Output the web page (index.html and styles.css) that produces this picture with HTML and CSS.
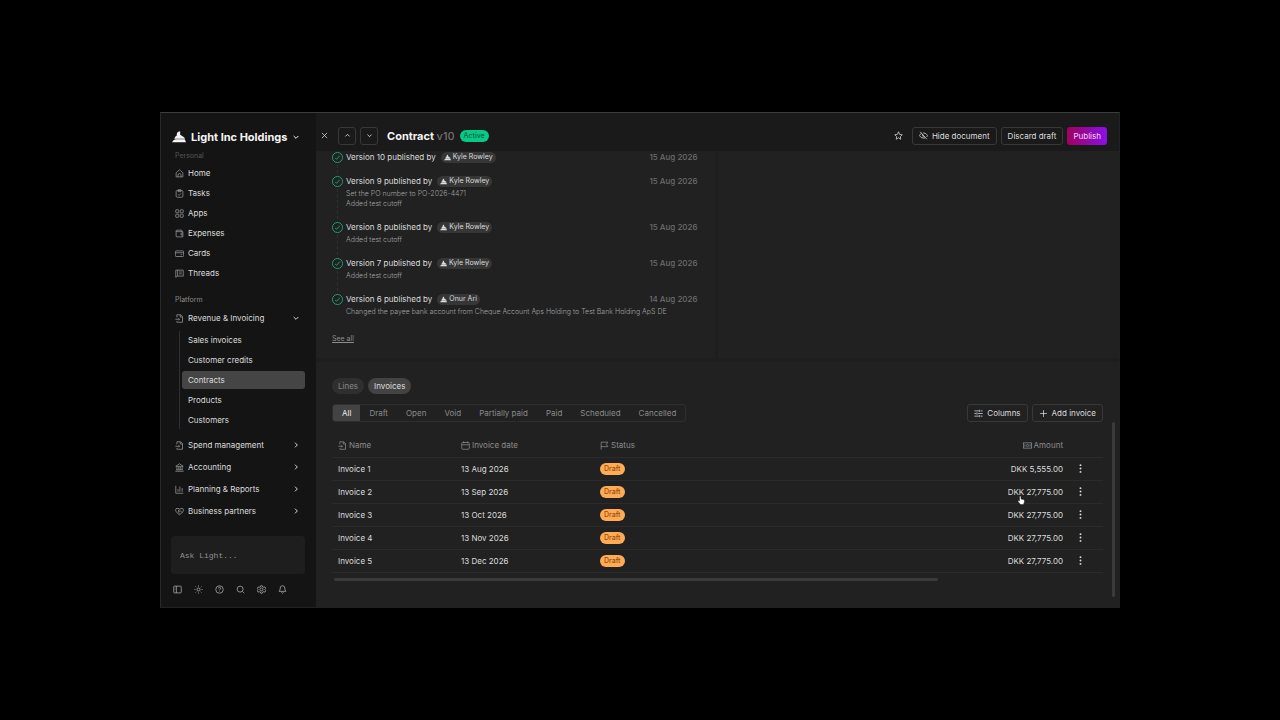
FILE: index.html
```
<!DOCTYPE html>
<html lang="en">
<head>
  <meta charset="UTF-8" />
  <title>Contract v10</title>
  <link rel="stylesheet" href="styles.css">
</head>
<body>

<!-- Icon set -->
<svg class="sprite" aria-hidden="true">
  <symbol id="logo" viewBox="0 0 24 24"><path d="M4 15 Q5 11 8 10 Q8 4 11 3 L14 2 V8 L20 12 Q22 13 22 15 Z M0 21 Q2 17 6 16 H22 L24 21 Z" fill="currentColor" stroke="none"/></symbol>
  <symbol id="down" viewBox="0 0 24 24"><path d="M5 9l7 7 7-7"/></symbol>
  <symbol id="up" viewBox="0 0 24 24"><path d="M5 15l7-7 7 7"/></symbol>
  <symbol id="right" viewBox="0 0 24 24"><path d="M9 5l7 7-7 7"/></symbol>
  <symbol id="close" viewBox="0 0 24 24"><path d="M5 5l14 14M19 5L5 19"/></symbol>
  <symbol id="home" viewBox="0 0 24 24"><path d="M3 10l9-8 9 8v11H3zM8 21v-5a4 4 0 0 1 8 0v5"/></symbol>
  <symbol id="tasks" viewBox="0 0 24 24"><rect x="3" y="4" width="18" height="18" rx="3"/><path d="M8 2h8v5H8zM8 14l3 3 5-5"/></symbol>
  <symbol id="apps" viewBox="0 0 24 24"><rect x="2" y="2" width="8" height="8" rx="1"/><rect x="14" y="2" width="8" height="8" rx="1"/><rect x="2" y="14" width="8" height="8" rx="1"/><rect x="14" y="14" width="8" height="8" rx="1"/></symbol>
  <symbol id="wallet" viewBox="0 0 24 24"><path d="M18 7V3H5a2 2 0 0 0 0 4h16v14H5a2 2 0 0 1-2-2V5M21 11h-5v5h5"/></symbol>
  <symbol id="card" viewBox="0 0 24 24"><rect x="1" y="5" width="22" height="15" rx="2"/><path d="M1 10h22M15 15h4"/></symbol>
  <symbol id="threads" viewBox="0 0 24 24"><path d="M2 3h20v16H7l-5 3zM7 3v16M11 8h7M11 13h7"/></symbol>
  <symbol id="file" viewBox="0 0 24 24"><path d="M5 9V2h10l5 5v15H5v-3M14 2v6h6M1 14h11M9 11l3 3-3 3"/></symbol>
  <symbol id="bank" viewBox="0 0 24 24"><path d="M2 9l10-7 10 7zM5 10v8M10 10v8M14 10v8M19 10v8M3 18h18M1 22h22"/></symbol>
  <symbol id="chart" viewBox="0 0 24 24"><path d="M2 2v20h20M8 11v7M13 4v14M19 8v10"/></symbol>
  <symbol id="partners" viewBox="0 0 24 24"><path d="M12 21L3 13Q0 9 3 4h8l2 2 3-2h5q3 5 0 9zM12 6l-4 5q3 3 6-1l5 5M9 14l4 4"/></symbol>
  <symbol id="sidebar" viewBox="0 0 24 24"><rect x="2" y="3" width="20" height="18" rx="2"/><path d="M9 3v18M5 8h1M5 12h1"/></symbol>
  <symbol id="sun" viewBox="0 0 24 24"><circle cx="12" cy="12" r="4"/><path d="M12 1v3M12 20v3M1 12h3M20 12h3M4 4l2 2M18 18l2 2M4 20l2-2M18 6l2-2"/></symbol>
  <symbol id="help" viewBox="0 0 24 24"><circle cx="12" cy="12" r="10"/><path d="M9 9a3 3 0 1 1 4 3q-1 0-1 2M12 17v1"/></symbol>
  <symbol id="search" viewBox="0 0 24 24"><circle cx="11" cy="11" r="8"/><path d="M17 17l5 5"/></symbol>
  <symbol id="gear" viewBox="0 0 24 24"><path d="M10 2h4l1 3 3 1 3-1 2 4-2 3 2 3-2 4-3-1-3 1-1 3h-4l-1-3-3-1-3 1-2-4 2-3-2-3 2-4 3 1 3-1z"/><circle cx="12" cy="12" r="4"/></symbol>
  <symbol id="bell" viewBox="0 0 24 24"><path d="M3 17q3-3 3-9a6 6 0 0 1 12 0q0 6 3 9zM9 20q3 4 6 0"/></symbol>
  <symbol id="star" viewBox="0 0 24 24"><path d="M12 2l3 7 7 1-5 5 1 7-6-4-6 4 1-7-5-5 7-1z"/></symbol>
  <symbol id="eye-off" viewBox="0 0 24 24"><path d="M3 2l18 20M7 6Q3 8 1 12q4 7 11 7 3 0 5-1M11 5q8 0 12 7-1 2-3 4M10 9a4 4 0 0 0 5 6"/></symbol>
  <symbol id="check" viewBox="0 0 24 24"><circle cx="12" cy="12" r="11"/><path d="M7 13l3 3 7-8"/></symbol>
  <symbol id="sliders" viewBox="0 0 24 24"><path d="M1 5h12M18 5h5M15 2v6M1 12h5M11 12h12M8 9v6M1 19h12M18 19h5M15 16v6"/></symbol>
  <symbol id="plus" viewBox="0 0 24 24"><path d="M12 3v18M3 12h18"/></symbol>
  <symbol id="calendar" viewBox="0 0 24 24"><rect x="2" y="4" width="20" height="18" rx="2"/><path d="M2 10h20M7 1v5M17 1v5"/></symbol>
  <symbol id="flag" viewBox="0 0 24 24"><path d="M3 23V3h18l-4 6 4 6H3"/></symbol>
  <symbol id="money" viewBox="0 0 24 24"><rect x="1" y="5" width="22" height="14"/><circle cx="12" cy="12" r="3"/><path d="M5 9v6M19 9v6"/></symbol>
  <symbol id="dots" viewBox="0 0 24 24"><g fill="currentColor" stroke="none"><circle cx="12" cy="3" r="2.5"/><circle cx="12" cy="12" r="2.5"/><circle cx="12" cy="21" r="2.5"/></g></symbol>
</svg>

<div class="app">

  <!-- Sidebar -->
  <aside class="sidebar">
    <button class="company"><svg class="logo"><use href="#logo"/></svg>Light Inc Holdings<svg class="icon"><use href="#down"/></svg></button>

    <nav class="nav">
      <div class="nav-label faded">Personal</div>
      <a href="#"><svg class="icon"><use href="#home"/></svg>Home</a>
      <a href="#"><svg class="icon"><use href="#tasks"/></svg>Tasks</a>
      <a href="#"><svg class="icon"><use href="#apps"/></svg>Apps</a>
      <a href="#"><svg class="icon"><use href="#wallet"/></svg>Expenses</a>
      <a href="#"><svg class="icon"><use href="#card"/></svg>Cards</a>
      <a href="#"><svg class="icon"><use href="#threads"/></svg>Threads</a>

      <div class="nav-label platform">Platform</div>
      <a href="#" class="group"><svg class="icon"><use href="#file"/></svg>Revenue &amp; Invoicing<svg class="icon caret"><use href="#down"/></svg></a>
      <div class="subnav">
        <a href="#">Sales invoices</a>
        <a href="#">Customer credits</a>
        <a href="#" class="current">Contracts</a>
        <a href="#">Products</a>
        <a href="#">Customers</a>
      </div>
      <a href="#" class="group"><svg class="icon"><use href="#file"/></svg>Spend management<svg class="icon caret"><use href="#right"/></svg></a>
      <a href="#" class="group"><svg class="icon"><use href="#bank"/></svg>Accounting<svg class="icon caret"><use href="#right"/></svg></a>
      <a href="#" class="group"><svg class="icon"><use href="#chart"/></svg>Planning &amp; Reports<svg class="icon caret"><use href="#right"/></svg></a>
      <a href="#" class="group"><svg class="icon"><use href="#partners"/></svg>Business partners<svg class="icon caret"><use href="#right"/></svg></a>
    </nav>

    <input class="ask" type="text" placeholder="Ask Light..." aria-label="Ask Light">

    <div class="tools">
      <button aria-label="Toggle sidebar"><svg class="icon"><use href="#sidebar"/></svg></button>
      <button aria-label="Theme"><svg class="icon"><use href="#sun"/></svg></button>
      <button aria-label="Help"><svg class="icon"><use href="#help"/></svg></button>
      <button aria-label="Search"><svg class="icon"><use href="#search"/></svg></button>
      <button aria-label="Settings"><svg class="icon"><use href="#gear"/></svg></button>
      <button aria-label="Notifications"><svg class="icon"><use href="#bell"/></svg></button>
    </div>
  </aside>

  <!-- Contract -->
  <main class="main">
    <header class="topbar">
      <button class="plain" aria-label="Close"><svg class="icon"><use href="#close"/></svg></button>
      <button class="btn square" aria-label="Previous"><svg class="icon small"><use href="#up"/></svg></button>
      <button class="btn square" aria-label="Next"><svg class="icon small"><use href="#down"/></svg></button>
      <h1>Contract <span>v10</span></h1>
      <span class="active">Active</span>
      <button class="plain star" aria-label="Favourite"><svg class="icon"><use href="#star"/></svg></button>
      <button class="btn"><svg class="icon"><use href="#eye-off"/></svg>Hide document</button>
      <button class="btn">Discard draft</button>
      <button class="btn publish">Publish</button>
    </header>

    <div class="panels">
      <section class="history">
        <ul>
          <li>
            <div class="entry"><svg class="icon check"><use href="#check"/></svg>Version 10 published by <span class="user"><svg class="icon"><use href="#logo"/></svg>Kyle Rowley</span><time>15 Aug 2026</time></div>
          </li>
          <li>
            <div class="entry"><svg class="icon check"><use href="#check"/></svg>Version 9 published by <span class="user"><svg class="icon"><use href="#logo"/></svg>Kyle Rowley</span><time>15 Aug 2026</time></div>
            <p>Set the PO number to PO-2026-4471<br>Added test cutoff</p>
          </li>
          <li>
            <div class="entry"><svg class="icon check"><use href="#check"/></svg>Version 8 published by <span class="user"><svg class="icon"><use href="#logo"/></svg>Kyle Rowley</span><time>15 Aug 2026</time></div>
            <p>Added test cutoff</p>
          </li>
          <li>
            <div class="entry"><svg class="icon check"><use href="#check"/></svg>Version 7 published by <span class="user"><svg class="icon"><use href="#logo"/></svg>Kyle Rowley</span><time>15 Aug 2026</time></div>
            <p>Added test cutoff</p>
          </li>
          <li>
            <div class="entry"><svg class="icon check"><use href="#check"/></svg>Version 6 published by <span class="user"><svg class="icon"><use href="#logo"/></svg>Onur Ari</span><time>14 Aug 2026</time></div>
            <p>Changed the payee bank account from Cheque Account Aps Holding to Test Bank Holding ApS DE</p>
          </li>
        </ul>
        <a href="#" class="see-all">See all</a>
      </section>
      <section class="document" aria-label="Document"></section>
    </div>

    <section class="invoices">
      <div class="pills">
        <button>Lines</button>
        <button class="on">Invoices</button>
      </div>

      <div class="toolbar">
        <div class="filters">
          <button class="on">All</button>
          <button>Draft</button>
          <button>Open</button>
          <button>Void</button>
          <button>Partially paid</button>
          <button>Paid</button>
          <button>Scheduled</button>
          <button>Cancelled</button>
        </div>
        <button class="btn"><svg class="icon"><use href="#sliders"/></svg>Columns</button>
        <button class="btn"><svg class="icon"><use href="#plus"/></svg>Add invoice</button>
      </div>

      <table>
        <thead>
          <tr>
            <th class="name"><svg class="icon"><use href="#file"/></svg>Name</th>
            <th class="date"><svg class="icon"><use href="#calendar"/></svg>Invoice date</th>
            <th><svg class="icon"><use href="#flag"/></svg>Status</th>
            <th class="amount"><svg class="icon"><use href="#money"/></svg>Amount</th>
            <th class="more"></th>
          </tr>
        </thead>
        <tbody>
          <tr>
            <td>Invoice 1</td><td>13 Aug 2026</td><td><span class="draft">Draft</span></td><td class="amount">DKK 5,555.00</td>
            <td class="more"><button class="plain" aria-label="More"><svg class="icon"><use href="#dots"/></svg></button></td>
          </tr>
          <tr>
            <td>Invoice 2</td><td>13 Sep 2026</td><td><span class="draft">Draft</span></td>
            <td class="amount">DKK 27,775.00<svg class="cursor" viewBox="0 0 16 20"><path d="M5 10V3q1-2 3 0v5l5 1q2 1 2 4l-2 6H7l-5-6q0-3 3-1z"/></svg></td>
            <td class="more"><button class="plain" aria-label="More"><svg class="icon"><use href="#dots"/></svg></button></td>
          </tr>
          <tr>
            <td>Invoice 3</td><td>13 Oct 2026</td><td><span class="draft">Draft</span></td><td class="amount">DKK 27,775.00</td>
            <td class="more"><button class="plain" aria-label="More"><svg class="icon"><use href="#dots"/></svg></button></td>
          </tr>
          <tr>
            <td>Invoice 4</td><td>13 Nov 2026</td><td><span class="draft">Draft</span></td><td class="amount">DKK 27,775.00</td>
            <td class="more"><button class="plain" aria-label="More"><svg class="icon"><use href="#dots"/></svg></button></td>
          </tr>
          <tr>
            <td>Invoice 5</td><td>13 Dec 2026</td><td><span class="draft">Draft</span></td><td class="amount">DKK 27,775.00</td>
            <td class="more"><button class="plain" aria-label="More"><svg class="icon"><use href="#dots"/></svg></button></td>
          </tr>
        </tbody>
      </table>
      <div class="scroll-x"></div>
      <div class="scroll-y"></div>
    </section>
  </main>
</div>

</body>
</html>
```
FILE: styles.css
```
* {
  box-sizing: border-box;
}
body {
  margin: 0;
  min-height: 100vh;
  padding: 112px 160px;
  display: flex;
  background-color: #000;
  color: #dcdcdc;
  font-family: Inter, sans-serif;
  font-size: 8px;
  line-height: 12px;
}
button, input {
  font: inherit;
  color: inherit;
  background: none;
  border: none;
  padding: 0;
  margin: 0;
}
a {
  color: inherit;
  text-decoration: none;
}
.sprite {
  position: absolute;
  width: 0;
  height: 0;
}
.icon {
  width: 9px;
  height: 9px;
  flex: none;
  fill: none;
  stroke: currentColor;
  stroke-width: 2;
}
.icon.small {
  width: 7px;
  height: 7px;
  stroke-width: 3;
}
.app {
  flex: 1;
  display: flex;
  background-color: #141414;
  border: 1px solid #222;
  border-top-color: #3c3c3c;
  border-left-color: #292929;
}

/* Sidebar */
.sidebar {
  width: 155px;
  flex: none;
  display: flex;
  flex-direction: column;
  padding: 0 11px 13px 10px;
}
.company {
  height: 38px;
  flex: none;
  display: flex;
  align-items: center;
  gap: 5px;
  padding: 9px 0 0 1px;
  color: #f4f4f4;
  font-size: 11px;
  font-weight: 700;
}
.company .icon {
  stroke-width: 3;
  width: 8px;
  height: 8px;
}
.logo {
  width: 14px;
  height: 14px;
}
.nav {
  flex: 1;
}
.nav a {
  display: flex;
  align-items: center;
  height: 20px;
  padding: 0 3px 0 4px;
  gap: 4px;
}
.nav a.group {
  height: 22px;
}
.nav a .icon {
  color: #9a9a9a;
}
.nav .caret {
  margin-left: auto;
  margin-right: 2px;
  stroke-width: 3;
  width: 8px;
  height: 8px;
}
.nav a .caret {
  color: #d6d6d6;
}
.nav-label {
  height: 10px;
  line-height: 10px;
  padding-left: 4px;
  margin-bottom: 2px;
  font-size: 7px;
  color: #8c8c8c;
}
.nav-label.faded {
  color: #555;
}
.nav-label.platform {
  margin-top: 12px;
}
.subnav {
  margin: 0 0 5px 8px;
  padding-left: 2px;
  border-left: 1px solid #303030;
}
.subnav a {
  height: 18px;
  margin: 2px 0;
  padding: 0 6px;
  border-radius: 3px;
}
.subnav a.current {
  background-color: #454545;
}
.ask {
  height: 38px;
  flex: none;
  width: 100%;
  padding: 0 9px;
  border-radius: 4px;
  background-color: #1e1e1e;
  font-family: "Liberation Mono", monospace;
}
.ask::placeholder {
  color: #909090;
}
.tools {
  display: flex;
  gap: 12px;
  padding: 11px 2px 0;
}
.tools button {
  height: 9px;
  display: flex;
  color: #b0b0b0;
}

/* Top bar */
.main {
  flex: 1;
  min-width: 0;
  display: flex;
  flex-direction: column;
  background-color: #212121;
}
.topbar {
  height: 38px;
  display: flex;
  align-items: center;
  gap: 4px;
  padding: 7px 12px 0 4px;
  background-color: #1a1a1a;
}
.plain {
  display: flex;
}
.topbar .square {
  width: 18px;
  padding: 0;
}
.topbar .plain + .square {
  margin-left: 5px;
}
.btn {
  height: 18px;
  display: flex;
  align-items: center;
  justify-content: center;
  gap: 4px;
  padding: 0 6px;
  border: 1px solid #383838;
  border-radius: 3px;
  white-space: nowrap;
}
.publish {
  border: none;
  color: #f3d9f5;
  background: linear-gradient(90deg, #a00060, #8a10e8);
}
h1 {
  margin: 0 1px 0 5px;
  font-size: 11px;
  font-weight: 700;
  color: #f4f4f4;
}
h1 span {
  color: #707070;
  font-weight: 500;
}
.active {
  padding: 0 4px;
  border-radius: 6px;
  background-color: #08c886;
  color: #08633f;
  font-size: 7px;
  font-weight: 500;
}
.star {
  margin-left: auto;
  margin-right: 5px;
}

/* Version history and document */
.panels {
  display: grid;
  grid-template-columns: 1fr 1fr;
  height: 211px;
  border-bottom: 4px solid #1e1e1e;
}
.history {
  padding: 0 17px 0 16px;
  border-right: 3px solid #1e1e1e;
}
.history ul {
  margin: 0;
  padding: 0;
  list-style: none;
}
.history li {
  position: relative;
  padding-bottom: 12px;
}
/* dashed line between two check marks */
.history li:not(:last-child)::before {
  content: "";
  position: absolute;
  left: 5px;
  top: 14px;
  bottom: 2px;
  border-left: 1px dashed #303030;
}
.entry {
  display: flex;
  align-items: center;
  height: 12px;
}
.check {
  width: 11px;
  height: 11px;
  margin-right: 3px;
  color: #1fa578;
}
.user {
  display: flex;
  align-items: center;
  gap: 2px;
  height: 11px;
  margin-left: 5px;
  padding: 0 3px;
  border-radius: 6px;
  background-color: #363636;
  font-size: 7px;
}
.user .icon {
  width: 7px;
  height: 7px;
}
.entry time {
  margin-left: auto;
  color: #6c6c6c;
  font-weight: 500;
}
.history p {
  margin: 2px 0 0 14px;
  font-size: 7px;
  line-height: 10px;
  font-weight: 300;
  color: #a0a0a0;
  white-space: nowrap;
}
.see-all {
  display: inline-block;
  margin-top: 4px;
  font-size: 7px;
  color: #8c8c8c;
  text-decoration: underline;
}

/* Invoices */
.invoices {
  position: relative;
  flex: 1;
  padding: 16px 16px 0 16px;
}
.pills {
  display: flex;
  gap: 4px;
}
.pills button {
  height: 16px;
  padding: 0 6px;
  border-radius: 8px;
  background-color: #2f2f2f;
  color: #858585;
}
.pills .on {
  background-color: #434343;
  color: #dedede;
}
.toolbar {
  display: flex;
  align-items: center;
  gap: 4px;
  margin-top: 10px;
}
.filters {
  display: flex;
  margin-right: auto;
  border: 1px solid #2e2e2e;
  border-radius: 3px;
  color: #8a8a8a;
}
.filters button {
  height: 16px;
  padding: 0 9px;
}
.filters .on {
  background-color: #434343;
  color: #ececec;
  border-radius: 2px 0 0 2px;
}
table {
  width: 100%;
  margin-top: 12px;
  border-collapse: collapse;
  table-layout: fixed;
}
th, td {
  height: 23px;
  padding: 0 6px;
  border-bottom: 1px solid #2b2b2b;
  text-align: left;
  font-weight: 400;
}
th {
  color: #8c8c8c;
}
th .icon {
  margin-right: 2px;
  vertical-align: -2px;
}
.name {
  width: 123px;
}
.date {
  width: 139px;
}
.amount {
  position: relative;
  text-align: right;
}
.more {
  width: 34px;
  padding: 0 7px;
}
.draft {
  display: inline-block;
  padding: 0 4px;
  border-radius: 6px;
  background-color: #ffab55;
  color: #9a4d10;
  font-size: 7px;
  font-weight: 500;
}
.cursor {
  position: absolute;
  right: 44px;
  top: 14px;
  width: 8px;
  height: 10px;
  fill: #fff;
  stroke: #222;
}
.scroll-x {
  width: 604px;
  max-width: 79%;
  height: 3px;
  margin: 5px 0 0 2px;
  background-color: #3a3a3a;
  border-radius: 2px;
}
.scroll-y {
  position: absolute;
  right: 4px;
  top: 60px;
  bottom: 10px;
  width: 3px;
  background-color: #3a3a3a;
  border-radius: 2px;
}
```
